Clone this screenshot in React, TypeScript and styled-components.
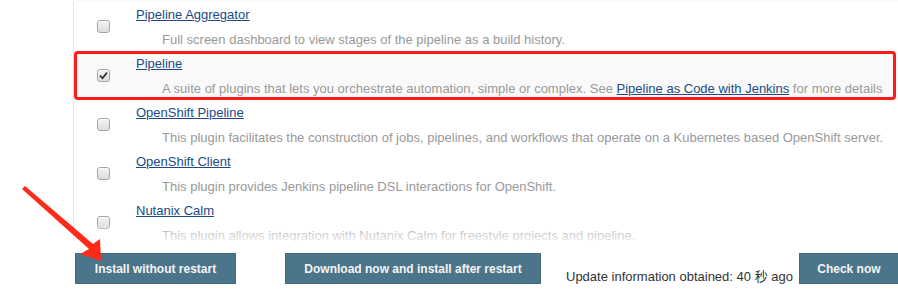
import styled, { createGlobalStyle } from 'styled-components';

const GlobalStyle = createGlobalStyle`
  html, body {
    margin: 0;
    padding: 0;
    background: #fff;
    font-family: 'Liberation Sans', Arial, 'Noto Sans CJK SC', sans-serif;
  }
`;

const Page = styled.div`
  position: relative;
  width: 898px;
  height: 290px;
  overflow: hidden;
`;

const PluginList = styled.div`
  position: relative;
  margin-left: 73px;
  width: 824px;
  height: 239px;
  border-left: 1px solid #e6e6e6;
  border-top: 2px solid #f9f9f9;
  overflow: hidden;
`;

const Row = styled.div<{ $selected?: boolean }>`
  position: relative;
  display: grid;
  grid-template-columns: 62px 1fr;
  height: 49px;
  background: ${(p) => (p.$selected ? '#f9f9f9' : '#fff')};
`;

const CheckCell = styled.div`
  display: flex;
  align-items: center;
  justify-content: center;
  padding-right: 3px;
`;

const CheckBox = styled.span<{ $checked?: boolean }>`
  display: flex;
  align-items: center;
  justify-content: center;
  width: 11px;
  height: 11px;
  border: 1px solid #a6a6a6;
  border-radius: 3px;
  background: linear-gradient(#f4f4f4, #dcdcdc);
  box-shadow: inset 0 1px 0 #fff;
`;

const Body = styled.div`
  padding-top: 3px;
  min-width: 0;
`;

const Title = styled.a`
  display: inline-block;
  font-size: 13px;
  line-height: 16px;
  color: #204a87;
  text-decoration: underline;
`;

const Desc = styled.div`
  margin: 9px 0 0 26px;
  font-size: 13px;
  line-height: 16px;
  color: #999;
  white-space: nowrap;

  a {
    color: #204a87;
    text-decoration: underline;
  }
`;

const Marker = styled.div`
  position: absolute;
  top: 0;
  bottom: 0;
  left: 0;
  right: 2px;
  border: 3px solid #ff1a1a;
  border-radius: 4px;
  pointer-events: none;
`;

const Fade = styled.div`
  position: absolute;
  left: 0;
  right: 0;
  bottom: 0;
  height: 18px;
  background: linear-gradient(rgba(255, 255, 255, 0), rgba(255, 255, 255, 0.8));
`;

const Footer = styled.div`
  display: flex;
  align-items: flex-start;
  padding: 12px 0 0 75px;
`;

const Button = styled.button<{ $width: number; $gap?: number }>`
  width: ${(p) => p.$width}px;
  height: 31px;
  margin-right: ${(p) => p.$gap ?? 0}px;
  padding: 0;
  border: 1px solid #45697d;
  background: #4b758b;
  color: #f4f4f4;
  font-family: 'Liberation Sans', Arial, sans-serif;
  font-size: 12px;
  font-weight: bold;
  flex-shrink: 0;
`;

const Info = styled.span`
  margin: 16px 6px 0 0;
  font-size: 13px;
  line-height: 16px;
  color: #333;
  white-space: nowrap;
`;

const Arrow = styled.svg`
  position: absolute;
  left: 0;
  top: 0;
  pointer-events: none;
`;

const Check = () => (
  <svg width='9' height='9' viewBox='0 0 9 9'>
    <path d='M1 4.6 L3.5 7.2 L8 1.6' fill='none' stroke='#333' strokeWidth='1.8' />
  </svg>
);

type Plugin = {
  title: string;
  desc: React.ReactNode;
  checked?: boolean;
};

const plugins: Plugin[] = [
  {
    title: 'Pipeline Aggregator',
    desc: 'Full screen dashboard to view stages of the pipeline as a build history.',
  },
  {
    title: 'Pipeline',
    checked: true,
    desc: (
      <>
        A suite of plugins that lets you orchestrate automation, simple or complex. See{' '}
        <a href='#'>Pipeline as Code with Jenkins</a> for more details
      </>
    ),
  },
  {
    title: 'OpenShift Pipeline',
    desc: 'This plugin facilitates the construction of jobs, pipelines, and workflows that operate on a Kubernetes based OpenShift server.',
  },
  {
    title: 'OpenShift Client',
    desc: 'This plugin provides Jenkins pipeline DSL interactions for OpenShift.',
  },
  {
    title: 'Nutanix Calm',
    desc: 'This plugin allows integration with Nutanix Calm for freestyle projects and pipeline.',
  },
];

export default function App() {
  return (
    <Page>
      <GlobalStyle />
      <PluginList>
        {plugins.map((p) => (
          <Row key={p.title} $selected={p.checked}>
            <CheckCell>
              <CheckBox $checked={p.checked}>{p.checked && <Check />}</CheckBox>
            </CheckCell>
            <Body>
              <Title href='#'>{p.title}</Title>
              <Desc>{p.desc}</Desc>
            </Body>
            {p.checked && <Marker />}
          </Row>
        ))}
        <Fade />
      </PluginList>
      <Footer>
        <Button $width={161} $gap={49}>Install without restart</Button>
        <Button $width={256} $gap={25}>Download now and install after restart</Button>
        <Info>Update information obtained: 40 秒 ago</Info>
        <Button $width={100}>Check now</Button>
      </Footer>
      <Arrow width='898' height='290' viewBox='0 0 898 290'>
        <polygon
          points='25,186 93,244 100,239 101,261 80,254 89,249 22,189'
          fill='#ff2a1a'
        />
      </Arrow>
    </Page>
  );
}
